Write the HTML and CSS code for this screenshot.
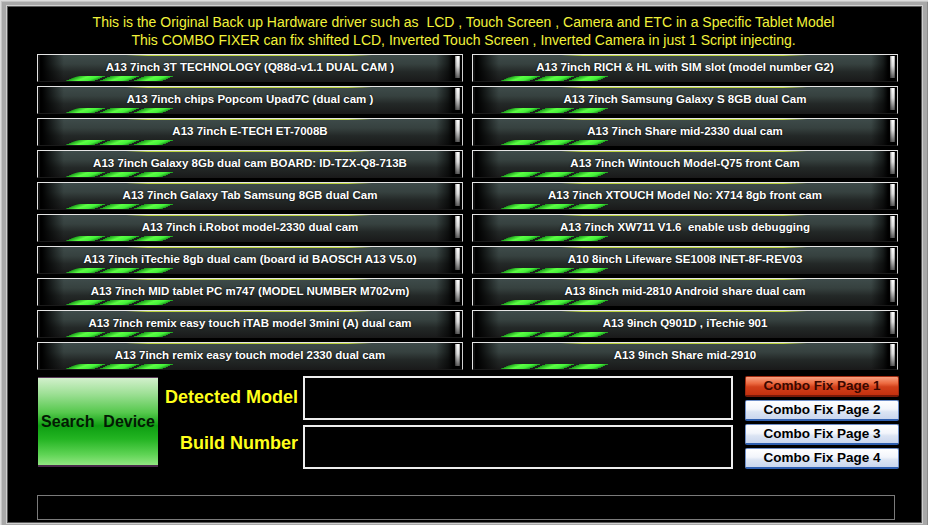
FILE: index.html
```html
<!DOCTYPE html>
<html>
<head>
<meta charset="utf-8">
<link rel="stylesheet" href="styles.css">
</head>
<body>
<div class="frame">
  <div class="panel">
    <div class="header">
      <div class="hl">This is the Original Back up Hardware driver such as  LCD , Touch Screen , Camera and ETC in a Specific Tablet Model</div>
      <div class="hl">This COMBO FIXER can fix shifted LCD, Inverted Touch Screen , Inverted Camera in just 1 Script injecting.</div>
    </div>
    <div class="grid">
      <div class="btn">A13 7inch 3T TECHNOLOGY (Q88d-v1.1 DUAL CAM )</div>
      <div class="btn">A13 7inch RICH &amp; HL with SIM slot (model number G2)</div>
      <div class="btn">A13 7inch chips Popcom Upad7C (dual cam )</div>
      <div class="btn">A13 7inch Samsung Galaxy S 8GB dual Cam</div>
      <div class="btn">A13 7inch E-TECH ET-7008B</div>
      <div class="btn">A13 7inch Share mid-2330 dual cam</div>
      <div class="btn">A13 7inch Galaxy 8Gb dual cam BOARD: ID-TZX-Q8-713B</div>
      <div class="btn">A13 7inch Wintouch Model-Q75 front Cam</div>
      <div class="btn">A13 7inch Galaxy Tab Samsung 8GB dual Cam</div>
      <div class="btn">A13 7inch XTOUCH Model No: X714 8gb front cam</div>
      <div class="btn">A13 7inch i.Robot model-2330 dual cam</div>
      <div class="btn">A13 7inch XW711 V1.6  enable usb debugging</div>
      <div class="btn">A13 7inch iTechie 8gb dual cam (board id BAOSCH A13 V5.0)</div>
      <div class="btn">A10 8inch Lifeware SE1008 INET-8F-REV03</div>
      <div class="btn">A13 7inch MID tablet PC m747 (MODEL NUMBER M702vm)</div>
      <div class="btn">A13 8inch mid-2810 Android share dual cam</div>
      <div class="btn">A13 7inch remix easy touch iTAB model 3mini (A) dual cam</div>
      <div class="btn">A13 9inch Q901D , iTechie 901</div>
      <div class="btn">A13 7inch remix easy touch model 2330 dual cam</div>
      <div class="btn">A13 9inch Share mid-2910</div>
    </div>
    <div class="bottom">
      <div class="search">Search  Device</div>
      <div class="fields">
        <div class="label l1">Detected Model</div>
        <div class="box"></div>
        <div class="label l2">Build Number</div>
        <div class="box"></div>
      </div>
      <div class="pages">
        <div class="page active">Combo Fix Page 1</div>
        <div class="page">Combo Fix Page 2</div>
        <div class="page">Combo Fix Page 3</div>
        <div class="page">Combo Fix Page 4</div>
      </div>
    </div>
    <div class="status"></div>
  </div>
</div>
</body>
</html>
```
FILE: styles.css
```css
html, body {
  margin: 0;
  padding: 0;
  background: #a0a0a0;
}
.frame {
  width: 928px;
  height: 525px;
  box-sizing: border-box;
  padding: 7px 7px 3px 8px;
  background: #a8a8a8;
  box-shadow: inset 1px 1px 0 #dcdcdc, inset 2px 2px 0 #c4c4c4, inset -1px 0 0 #8a8a8a;
  overflow: hidden;
}
.panel {
  height: 100%;
  background: #000;
  box-shadow: 0 0 0 1px #5a5a5a, 0 0 0 2px #d0d0d0;
  display: flex;
  flex-direction: column;
  font-family: "Liberation Sans", Arial, sans-serif;
}
.header {
  padding-top: 6px;
  text-align: center;
  color: #f2f23a;
  font-size: 14px;
  line-height: 18px;
  margin-left: -2px;
}
.hl {
  white-space: pre;
}
.grid {
  margin: 5px 0 0 29px;
  width: 861px;
  display: grid;
  grid-template-columns: 426px 426px;
  grid-auto-rows: 28px;
  column-gap: 9px;
  row-gap: 4px;
}
.btn {
  position: relative;
  box-sizing: border-box;
  border: 1px solid #e4e4e4;
  border-bottom-color: #1a1a1a;
  border-right-color: #cfcfcf;
  background:
    linear-gradient(to right, rgba(0,0,0,0) 88px, rgba(200,225,60,0.9) 110px, rgba(200,225,60,0.9) 310px, rgba(0,0,0,0) 334px) top left / 100% 1px no-repeat,
    linear-gradient(to right, #000 0, #000 4px, rgba(0,0,0,0) 26px),
    linear-gradient(to left, #000 0, #000 9px, rgba(0,0,0,0.6) 14px, rgba(0,0,0,0) 26px),
    linear-gradient(to bottom, #3e4b4a 0%, #36413f 35%, #232827 65%, #1a1b1b 100%);
  color: #fff;
  font-weight: bold;
  font-size: 11.5px;
  line-height: 25px;
  text-align: center;
  white-space: pre;
  text-shadow: 0 0 2px #000;
  box-shadow: inset 2px 0 0 #111;
}
.btn::before {
  content: "";
  position: absolute;
  left: 33px;
  bottom: 0px;
  width: 100px;
  height: 5px;
  background: repeating-linear-gradient(to right, #1a9a1a 0, #5cff44 12px, #44f03a 22px, #1c9a1c 29px, rgba(0,0,0,0) 29px, rgba(0,0,0,0) 34px);
  transform: skewX(-68deg);
  border-radius: 3px 1px 3px 1px;
}
.btn::after {
  content: "";
  position: absolute;
  right: 2px;
  top: 1px;
  bottom: 3px;
  width: 5px;
  background:
    linear-gradient(to right, rgba(0,0,0,0.5), rgba(0,0,0,0) 40%, rgba(0,0,0,0) 70%, rgba(0,0,0,0.4)),
    linear-gradient(to bottom, #ffffff 0%, #dcdcdc 45%, #5a5a5a 100%);
}
.bottom {
  margin-top: 6px;
  display: flex;
  align-items: flex-start;
  height: 94px;
}
.search {
  margin: 1px 0 0 30px;
  width: 120px;
  height: 90px;
  box-sizing: border-box;
  border-top: 1px solid #5a3a5a;
  border-bottom: 2px solid #4a2a4a;
  background: linear-gradient(to bottom, #d2f0cc 0%, #9ee096 18%, #55c84c 40%, #0e9e12 55%, #23b422 70%, #5fd455 88%, #92e682 100%);
  color: #031a03;
  font-weight: bold;
  font-size: 16px;
  line-height: 88px;
  text-align: center;
  white-space: pre;
}
.fields {
  margin-left: 2px;
  display: grid;
  grid-template-columns: 138px 430px;
  grid-template-rows: 44px 44px;
  column-gap: 5px;
  row-gap: 5px;
}
.label {
  color: #ffff1a;
  font-weight: bold;
  font-size: 18px;
  text-align: right;
  align-self: center;
  white-space: nowrap;
}
.l1 { padding-bottom: 2px; }
.l2 { padding-bottom: 8px; }
.box {
  box-sizing: border-box;
  border: 2px solid #ededed;
  background: #000;
}
.pages {
  margin-left: 12px;
  width: 154px;
  display: flex;
  flex-direction: column;
  gap: 3px;
}
.page {
  box-sizing: border-box;
  height: 21px;
  border: 1px solid #6f8fc8;
  border-bottom: 2px solid #2f5fb0;
  border-radius: 2px;
  background: linear-gradient(to bottom, #ffffff 0%, #f2f5fb 45%, #dbe4f3 60%, #c9d6ee 100%);
  color: #000;
  font-weight: bold;
  font-size: 13.5px;
  line-height: 18px;
  text-align: center;
}
.page.active {
  border-color: #a02a10;
  border-bottom-color: #7a1a08;
  background: linear-gradient(to bottom, #f8a080 0%, #ec6a40 35%, #d2401a 55%, #c4300e 100%);
  color: #3a0800;
}
.status {
  margin: 25px 0 0 29px;
  width: 858px;
  height: 25px;
  box-sizing: border-box;
  border: 1px solid #7a7a7a;
}
```
